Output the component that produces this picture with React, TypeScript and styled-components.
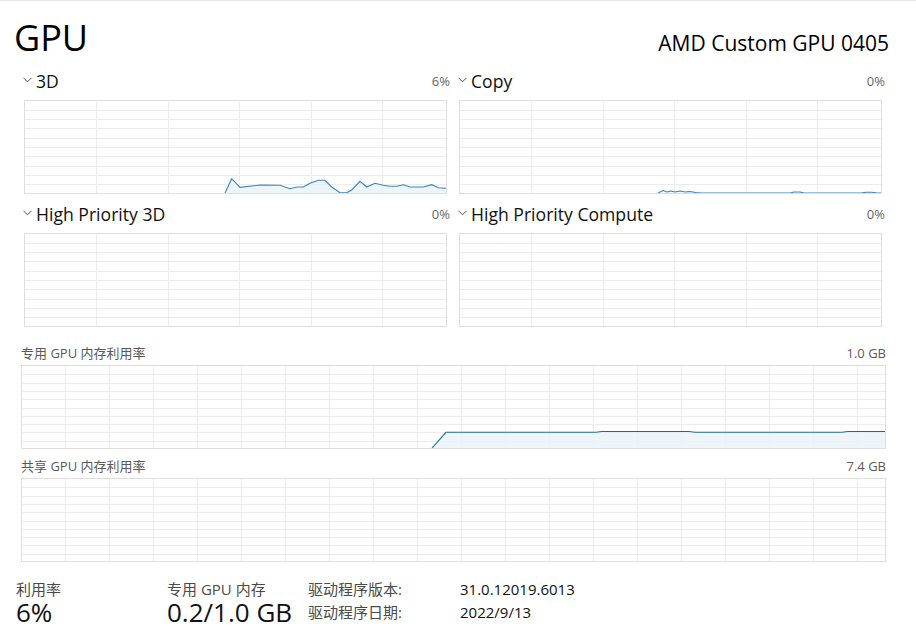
import React from "react";
import styled, { createGlobalStyle } from "styled-components";

type Pt = [number, number];

const GlobalStyle = createGlobalStyle`
  html, body {
    margin: 0;
    padding: 0;
    background: #fff;
  }
  body {
    font-family: "Open Sans", "Noto Sans CJK SC", sans-serif;
    color: #000;
  }
`;

// engine samples, in px inside the chart frame
const load3d: Pt[] = [
  [200, 92], [206.7, 77.7], [215, 86.3], [235, 84], [255, 84.3], [265, 87.7],
  [271.7, 86], [278.3, 86], [285, 82.3], [293.3, 79.3], [300, 79.3], [306.7, 86],
  [315, 91.7], [321.7, 91.7], [326.7, 89], [335, 80.3], [341.7, 86], [350, 82.3],
  [358.3, 84.3], [365, 85.3], [371.7, 85.3], [378.3, 83.7], [385, 86], [398.3, 86],
  [406.7, 83.7], [413.3, 86.7], [421, 87.3],
];

const loadCopy: Pt[] = [
  [198, 92], [203, 89.5], [207, 91], [211, 90], [215, 91], [220, 90], [225, 91],
  [230, 90.5], [236, 91.5], [241, 92], [330, 92], [334, 91], [340, 91], [344, 92],
  [401, 92], [406, 91.2], [412, 91.2], [417, 92], [421, 92],
];

const dedicated: Pt[] = [
  [410, 82], [424, 66.3], [574, 66.3], [580, 65.5], [667, 65.5], [673, 66.3],
  [820, 66.3], [826, 65.5], [863, 65.5],
];

const engines = [
  { name: "3D", pct: "6%", data: load3d },
  { name: "Copy", pct: "0%", data: loadCopy },
  { name: "High Priority 3D", pct: "0%", data: [] as Pt[] },
  { name: "High Priority Compute", pct: "0%", data: [] as Pt[] },
];

interface ChartProps {
  w: number;
  h: number;
  colW: number;
  colStart: number;
  rowH: number;
  rowShift: number;
  points: Pt[];
  stroke: string;
}

function GridChart({ w, h, colW, colStart, rowH, rowShift, points, stroke }: ChartProps) {
  const cols: number[] = [];
  for (let x = colStart; x < w - 1; x += colW) cols.push(Math.round(x) + 0.5);
  const rows: number[] = [];
  for (let i = 1; i < 10; i++) rows.push(Math.floor(i * rowH + rowShift) + 0.5);

  const line = points.map((p) => p.join(",")).join(" ");
  const area = points.length
    ? `${points[0][0]},${h} ${line} ${points[points.length - 1][0]},${h}`
    : "";

  return (
    <Frame $w={w} $h={h}>
      <svg width={w} height={h} viewBox={`0 0 ${w} ${h}`}>
        <g stroke="#ececec" strokeWidth="1" shapeRendering="crispEdges">
          {cols.map((x) => (
            <line key={"c" + x} x1={x} y1={0} x2={x} y2={h} />
          ))}
          {rows.map((y) => (
            <line key={"r" + y} x1={0} y1={y} x2={w} y2={y} />
          ))}
        </g>
        {points.length > 0 && (
          <>
            <polygon points={area} fill="#eaf3fa" fillOpacity="0.85" />
            <polyline points={line} fill="none" stroke={stroke} strokeWidth="1.1" />
          </>
        )}
      </svg>
    </Frame>
  );
}

function Chevron() {
  return (
    <ChevronIcon width="9" height="6" viewBox="0 0 9 6">
      <path d="M0.5 0.8 L4.5 4.8 L8.5 0.8" fill="none" stroke="#555" strokeWidth="1" />
    </ChevronIcon>
  );
}

export default function App() {
  return (
    <>
      <GlobalStyle />
      <Page>
        <Header>
          <Title>GPU</Title>
          <Adapter>AMD Custom GPU 0405</Adapter>
        </Header>

        <EngineGrid>
          {engines.map((e) => (
            <Engine key={e.name}>
              <EngineHead>
                <Chevron />
                <EngineName>{e.name}</EngineName>
                <Percent>{e.pct}</Percent>
              </EngineHead>
              <ChartSlot>
                <GridChart
                  w={421}
                  h={92}
                  colW={71.5}
                  colStart={71}
                  rowH={9.3}
                  rowShift={0}
                  points={e.data}
                  stroke="#3a86bb"
                />
              </ChartSlot>
            </Engine>
          ))}
        </EngineGrid>

        <Memory>
          <MemBlock>
            <MemLabel>
              <span>专用 GPU 内存利用率</span>
              <span>1.0 GB</span>
            </MemLabel>
            <GridChart
              w={863}
              h={82}
              colW={44}
              colStart={43}
              rowH={8.3}
              rowShift={0.5}
              points={dedicated}
              stroke="#1d6c93"
            />
          </MemBlock>
          <MemBlock>
            <MemLabel>
              <span>共享 GPU 内存利用率</span>
              <span>7.4 GB</span>
            </MemLabel>
            <GridChart
              w={863}
              h={82}
              colW={44}
              colStart={43}
              rowH={8.3}
              rowShift={0.5}
              points={[]}
              stroke="#1d6c93"
            />
          </MemBlock>
        </Memory>

        <Stats>
          <Stat $w={151}>
            <StatLabel>利用率</StatLabel>
            <StatValue>6%</StatValue>
          </Stat>
          <Stat $w={141}>
            <StatLabel>专用 GPU 内存</StatLabel>
            <StatValue>0.2/1.0 GB</StatValue>
          </Stat>
          <Props>
            <PropKey>驱动程序版本:</PropKey>
            <PropVal>31.0.12019.6013</PropVal>
            <PropKey>驱动程序日期:</PropKey>
            <PropVal>2022/9/13</PropVal>
          </Props>
        </Stats>
      </Page>
    </>
  );
}

const Page = styled.div`
  width: 916px;
  height: 627px;
  box-sizing: border-box;
  border-top: 1px solid #e6e6e6;
  overflow: hidden;
`;

const Header = styled.header`
  display: flex;
  justify-content: space-between;
  align-items: baseline;
  height: 52px;
  padding: 11px 27px 0 14px;
`;

const Title = styled.h1`
  margin: 0;
  font-size: 36px;
  font-weight: 400;
  line-height: 52px;
`;

const Adapter = styled.div`
  font-size: 21px;
  line-height: 30px;
`;

const EngineGrid = styled.div`
  display: grid;
  grid-template-columns: 428px 428px;
  column-gap: 7px;
  row-gap: 8px;
  margin-top: 5px;
  padding-left: 22px;
`;

const Engine = styled.section`
  display: flex;
  flex-direction: column;
`;

const EngineHead = styled.div`
  display: flex;
  align-items: center;
  height: 24px;
  margin-bottom: 7px;
`;

const ChevronIcon = styled.svg`
  margin: 0 4px 3px 1px;
  flex-shrink: 0;
`;

const EngineName = styled.span`
  font-size: 17.6px;
  line-height: 24px;
  color: #111;
`;

const Percent = styled.span`
  margin-left: auto;
  font-size: 13px;
  color: #666;
`;

const ChartSlot = styled.div`
  margin-left: 2px;
`;

const Frame = styled.div<{ $w: number; $h: number }>`
  width: ${(p) => p.$w}px;
  height: ${(p) => p.$h}px;
  border: 1px solid #dedede;
  overflow: hidden;

  svg {
    display: block;
  }
`;

const Memory = styled.div`
  display: flex;
  flex-direction: column;
  gap: 8px;
  margin-top: 17px;
  padding-left: 21px;
  width: 865px;
`;

const MemBlock = styled.section``;

const MemLabel = styled.div`
  display: flex;
  justify-content: space-between;
  font-size: 13px;
  line-height: 18px;
  color: #5a5a5a;
  margin-bottom: 3px;
`;

const Stats = styled.div`
  display: flex;
  align-items: flex-start;
  margin-top: 17px;
  padding-left: 16px;
`;

const Stat = styled.div<{ $w: number }>`
  width: ${(p) => p.$w}px;
  display: flex;
  flex-direction: column;
`;

const StatLabel = styled.span`
  font-size: 15px;
  line-height: 20px;
  color: #4a4a4a;
`;

const StatValue = styled.span`
  font-size: 26px;
  line-height: 27px;
  color: #111;
`;

const Props = styled.div`
  display: grid;
  grid-template-columns: 152px auto;
  margin-top: -1px;
  font-size: 15px;
  line-height: 23px;
`;

const PropKey = styled.span`
  color: #4a4a4a;
`;

const PropVal = styled.span`
  color: #111;
`;
